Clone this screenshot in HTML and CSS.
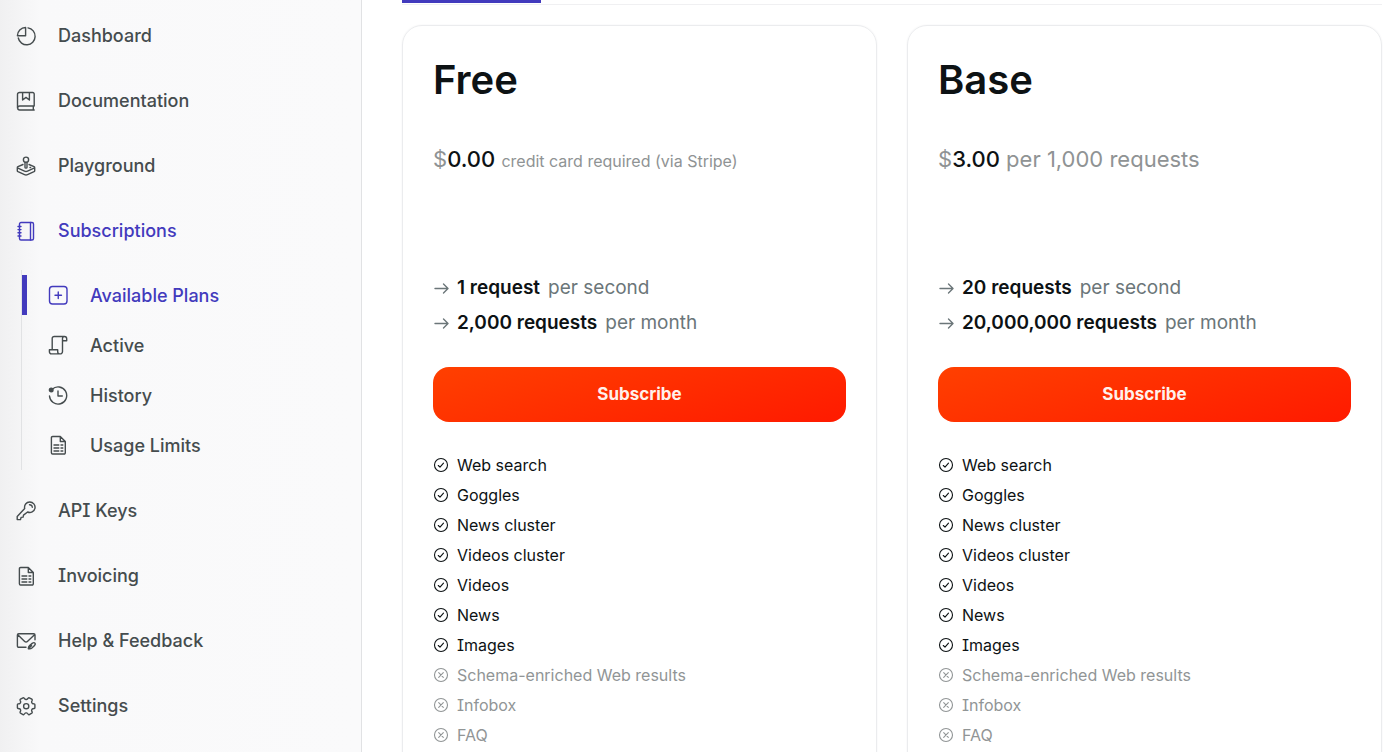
FILE: index.html
```
<!DOCTYPE html>
<html lang="en">
<head>
<meta charset="utf-8">
<meta name="viewport" content="width=device-width, initial-scale=1">
<title>Available Plans</title>
<link rel="stylesheet" href="styles.css">
</head>
<body>
<svg class="sprite" aria-hidden="true">
  <symbol id="i-pie" viewBox="0 0 20 20"><path d="M9.600 9.700H1.400C1.400 5.200 5 1.500 9.600 1.500zM12 1.900A8.500 8.500 0 1 1 2.300 12"/></symbol>
  <symbol id="i-book" viewBox="0 0 20 20"><path d="M18.200 15V3a1.500 1.500 0 0 0-1.500-1.500H3.500A2 2 0 0 0 1.500 3.500V17M18.200 15H3.700a2 2 0 0 0 0 4h14.500M17.300 15v4M6.600 1.500V9l3.400-2.600L13.400 9V1.500"/></symbol>
  <symbol id="i-joystick" viewBox="0 0 20 20"><circle cx="10" cy="3.700" r="2.600"/><path d="M9 6.400v5.100c0 .8 2 .8 2 0V6.400M7 8.500l-5 2.200c-.9.400-.9 1 0 1.500l6.500 3c1 .5 2 .5 3 0l6.500-3c.9-.5.9-1.100 0-1.500l-5-2.200M1.300 11.700v3c0 .5.200.7.700 1l6.500 3c1 .5 2 .5 3 0l6.500-3c.5-.3.7-.5.7-1v-3M14 11.500h.6"/></symbol>
  <symbol id="i-notebook" viewBox="0 0 20 20"><rect x="3.500" y="1.500" width="14" height="17.500" rx="1.500"/><path d="M14.500 1.500V19M2 5.500h3M2 8.600h3M2 11.800h3M2 15h3"/></symbol>
  <symbol id="i-plus" viewBox="0 0 20 20"><rect x="1.500" y="1.500" width="17.500" height="17.500" rx="3"/><path d="M10.250 7v6.500M7 10.250h6.500"/></symbol>
  <symbol id="i-scroll" viewBox="0 0 20 20"><path d="M16.500 1.500H6.200A2 2 0 0 0 4.200 3.500V14.800M16.500 1.500c1.300 0 2.200.9 2.200 2.200v2.100h-4.200V3.600c0-1.200.8-2.100 2-2.100M14.500 5.800v10.700a2.400 2.400 0 0 1-2.400 2.400H3.400c-1.200 0-2-1-2-2.200v-1.900h8.300v1.900c0 1.300 1 2.200 2.300 2.200"/></symbol>
  <symbol id="i-history" viewBox="0 0 20 20"><path d="M4.200 4.200A8.600 8.600 0 1 1 1.500 11M10 6v5h4.300"/><circle class="solid" cx="3.200" cy="4.900" r="1.800"/></symbol>
  <symbol id="i-file" viewBox="0 0 20 20"><path d="M4.600 1.500h7.700l5 5v11.300a1.200 1.200 0 0 1-1.200 1.200H4.600a1.200 1.200 0 0 1-1.200-1.200V2.700a1.200 1.200 0 0 1 1.200-1.200zM12.300 1.500v5h5M6 10h4.800M6 13h4.800M6 16h4.800M13 10h1.800M13 13h1.800M13 16h1.800"/></symbol>
  <symbol id="i-key" viewBox="0 0 20 20"><path d="M8.700 7.500L1.200 15.600v3h3.300l.6-2.200 2-.3.400-2L11.600 11A5.250 5.250 0 1 0 8.700 7.500zM13.500 3.800c1.500-.1 2.700.9 2.800 2.400"/></symbol>
  <symbol id="i-mail" viewBox="0 0 20 20"><path d="M10 16.300H2.700a1.300 1.300 0 0 1-1.300-1.300V4.100a1.300 1.300 0 0 1 1.300-1.300h15a1.300 1.300 0 0 1 1.300 1.300v4.600M1.800 3.700l6.900 6.700c.8.800 1.900.8 2.700 0l7.100-6.700M12.400 17.700c-.2-1.300.2-2.200 1.200-3.100l2.600-2.200c1-.8 2.200-.9 2.700-.3.500.600.3 1.700-.6 2.600l-2.400 2.300c-1 .9-2.100 1-3.500.7zM12.400 17.700l3.100-2.900"/></symbol>
  <symbol id="i-gear" viewBox="0 0 20 20"><circle cx="10.200" cy="10.200" r="2.600"/><path transform="rotate(90 10.200 10.200)" d="M8.700 1.500h3q.7 0 .8.700l.2 1.300q.1.600.7.900l.4.200q.6.300 1.100.1l1.200-.5q.7-.2 1.100.4l1.400 2.500q.3.600-.2 1l-1 .9q-.5.400-.5 1v.5q0 .6.500 1l1 .9q.5.400.2 1l-1.400 2.500q-.4.600-1.100.4l-1.200-.5q-.5-.2-1.100.1l-.4.200q-.6.300-.7.900l-.2 1.300q-.1.700-.8.700h-3q-.7 0-.8-.7l-.2-1.300q-.1-.6-.7-.9l-.4-.2q-.6-.3-1.100-.1l-1.200.5q-.7.200-1.100-.4l-1.400-2.500q-.3-.6.2-1l1-.9q.5-.4.5-1V10q0-.6-.5-1l-1-.9q-.5-.4-.2-1l1.400-2.500q.4-.6 1.100-.4l1.200.5q.5.200 1.100-.1l.4-.2q.6-.3.7-.9l.2-1.300q.1-.7.800-.7z"/></symbol>
  <symbol id="i-arrow" viewBox="0 0 16 16"><path d="M2 8.500h12.700M10.500 4l4.500 4.500-4.500 4.500"/></symbol>
  <symbol id="i-check" viewBox="0 0 16 16"><circle cx="8" cy="8" r="6.500"/><path d="M5.300 8.500l1.700 1.600 3.500-4"/></symbol>
  <symbol id="i-cross" viewBox="0 0 16 16"><circle cx="8" cy="8" r="6.500"/><path d="M5.700 5.700l4.600 4.600M10.300 5.700l-4.600 4.600"/></symbol>
</svg>
<div class="shell">
  <aside class="sidebar">
    <nav aria-label="Main">
      <ul class="menu">
        <li><a class="link" href="#dashboard"><svg class="icon"><use href="#i-pie"/></svg>Dashboard</a></li>
        <li><a class="link" href="#documentation"><svg class="icon"><use href="#i-book"/></svg>Documentation</a></li>
        <li><a class="link" href="#playground"><svg class="icon"><use href="#i-joystick"/></svg>Playground</a></li>
        <li>
          <a class="link current" href="#subscriptions"><svg class="icon"><use href="#i-notebook"/></svg>Subscriptions</a>
          <ul class="submenu">
            <li><a class="sublink current" href="#plans" aria-current="page"><svg class="icon"><use href="#i-plus"/></svg>Available Plans</a></li>
            <li><a class="sublink" href="#active"><svg class="icon"><use href="#i-scroll"/></svg>Active</a></li>
            <li><a class="sublink" href="#history"><svg class="icon"><use href="#i-history"/></svg>History</a></li>
            <li><a class="sublink" href="#limits"><svg class="icon"><use href="#i-file"/></svg>Usage Limits</a></li>
          </ul>
        </li>
        <li><a class="link" href="#keys"><svg class="icon"><use href="#i-key"/></svg>API Keys</a></li>
        <li><a class="link" href="#invoicing"><svg class="icon"><use href="#i-file"/></svg>Invoicing</a></li>
        <li><a class="link" href="#help"><svg class="icon"><use href="#i-mail"/></svg>Help &amp; Feedback</a></li>
        <li><a class="link" href="#settings"><svg class="icon"><use href="#i-gear"/></svg>Settings</a></li>
      </ul>
    </nav>
  </aside>
  <main class="content">
    <div class="tabs"><div class="tab-marker"></div></div>
    <div class="plans">
      <section class="card">
        <h2 class="name">Free</h2>
        <p class="price"><span>$</span><strong class="amount">0.00</strong> <span class="note">credit card required (via Stripe)</span></p>
        <ul class="quota">
          <li><svg class="mark"><use href="#i-arrow"/></svg><strong class="count">1 request</strong><span>per second</span></li>
          <li><svg class="mark"><use href="#i-arrow"/></svg><strong class="count">2,000 requests</strong><span>per month</span></li>
        </ul>
        <button class="subscribe" type="button">Subscribe</button>
        <ul class="features">
          <li><svg class="mark"><use href="#i-check"/></svg>Web search</li>
          <li><svg class="mark"><use href="#i-check"/></svg>Goggles</li>
          <li><svg class="mark"><use href="#i-check"/></svg>News cluster</li>
          <li><svg class="mark"><use href="#i-check"/></svg>Videos cluster</li>
          <li><svg class="mark"><use href="#i-check"/></svg>Videos</li>
          <li><svg class="mark"><use href="#i-check"/></svg>News</li>
          <li><svg class="mark"><use href="#i-check"/></svg>Images</li>
          <li class="off"><svg class="mark"><use href="#i-cross"/></svg>Schema-enriched Web results</li>
          <li class="off"><svg class="mark"><use href="#i-cross"/></svg>Infobox</li>
          <li class="off"><svg class="mark"><use href="#i-cross"/></svg>FAQ</li>
        </ul>
      </section>
      <section class="card">
        <h2 class="name">Base</h2>
        <p class="price"><span>$</span><strong class="amount">3.00</strong> <span>per 1,000 requests</span></p>
        <ul class="quota">
          <li><svg class="mark"><use href="#i-arrow"/></svg><strong class="count">20 requests</strong><span>per second</span></li>
          <li><svg class="mark"><use href="#i-arrow"/></svg><strong class="count">20,000,000 requests</strong><span>per month</span></li>
        </ul>
        <button class="subscribe" type="button">Subscribe</button>
        <ul class="features">
          <li><svg class="mark"><use href="#i-check"/></svg>Web search</li>
          <li><svg class="mark"><use href="#i-check"/></svg>Goggles</li>
          <li><svg class="mark"><use href="#i-check"/></svg>News cluster</li>
          <li><svg class="mark"><use href="#i-check"/></svg>Videos cluster</li>
          <li><svg class="mark"><use href="#i-check"/></svg>Videos</li>
          <li><svg class="mark"><use href="#i-check"/></svg>News</li>
          <li><svg class="mark"><use href="#i-check"/></svg>Images</li>
          <li class="off"><svg class="mark"><use href="#i-cross"/></svg>Schema-enriched Web results</li>
          <li class="off"><svg class="mark"><use href="#i-cross"/></svg>Infobox</li>
          <li class="off"><svg class="mark"><use href="#i-cross"/></svg>FAQ</li>
        </ul>
      </section>
    </div>
  </main>
</div>
</body>
</html>
```
FILE: styles.css
```
* { box-sizing: border-box; }
body {
  margin: 0;
  background: #fff;
  color: #0d1214;
  font-family: Inter, "Liberation Sans", sans-serif;
  font-size: 16px;
  font-feature-settings: "cv08" 1;
}
ul, h2, p { margin: 0; padding: 0; }
ul { list-style: none; }
.sprite { display: none; }
.icon, .mark {
  flex: none;
  fill: none;
  stroke: currentColor;
  stroke-linecap: round;
  stroke-linejoin: round;
}
.icon { width: 20px; height: 20px; stroke-width: 1.4; }
.mark { width: 16px; height: 16px; stroke-width: 1.1; }
.solid { fill: currentColor; }

.shell {
  display: grid;
  grid-template-columns: 362px minmax(0, 1fr);
  height: 100vh;
  overflow: hidden;
}
.sidebar {
  padding: 3px 16px;
  border-right: 1px solid #e1e2e4;
  background: linear-gradient(90deg, #f0f0f1 0, #f9f9fa 40px, #fafafb 100%);
}
.link, .sublink {
  display: flex;
  align-items: center;
  color: #454c4e;
  font-size: 18px;
  font-weight: 500;
  text-decoration: none;
}
.link { gap: 22px; height: 65px; }
.submenu {
  margin: 7px 0 8px 5px;
  border-left: 1px solid #e1e2e4;
}
.sublink {
  gap: 22px;
  height: 40px;
  padding-left: 26px;
}
.submenu li { padding: 5px 0; }
.link.current, .sublink.current { color: #423abd; }
.sublink.current {
  padding-left: 21px;
  border-left: 5px solid #423abd;
  border-radius: 0 2px 2px 0;
}

.content { padding: 0 10px 0 40px; }
.tabs { height: 5px; border-bottom: 1px solid #f0f0f2; }
.tab-marker { width: 139px; height: 3px; background: #423abd; }
.plans {
  display: grid;
  grid-template-columns: repeat(2, minmax(0, 1fr));
  gap: 30px;
  padding-top: 20px;
}
.card {
  padding: 30px 30px 48px;
  border: 1px solid #ebecee;
  border-radius: 20px;
  box-shadow: 0 0 2px #f0f0f2;
}
.name { font-size: 40px; font-weight: 600; line-height: 48px; }
.price {
  margin-top: 39px;
  color: #8f9394;
  font-size: 22px;
  line-height: 32px;
}
.amount { color: #0d1214; font-weight: 500; }
.note { font-size: 16px; line-height: 16px; }
.quota { margin-top: 95px; }
.quota li {
  display: flex;
  align-items: center;
  gap: 8px;
  height: 35px;
  color: #6b7679;
  font-size: 19px;
}
.quota .mark { stroke-width: 1.4; }
.count { color: #0d1214; font-weight: 600; }
.subscribe {
  width: 100%;
  height: 55px;
  margin: 27px 0 28px;
  padding: 0 0 2px;
  border: 0;
  border-radius: 16px;
  background: linear-gradient(165deg, #ff4000, #ff1a00);
  color: #fff0eb;
  font: inherit;
  font-size: 17px;
  font-weight: 700;
}
.features li {
  display: flex;
  align-items: center;
  gap: 8px;
  height: 30px;
}
.features .off { color: #919596; }
```
